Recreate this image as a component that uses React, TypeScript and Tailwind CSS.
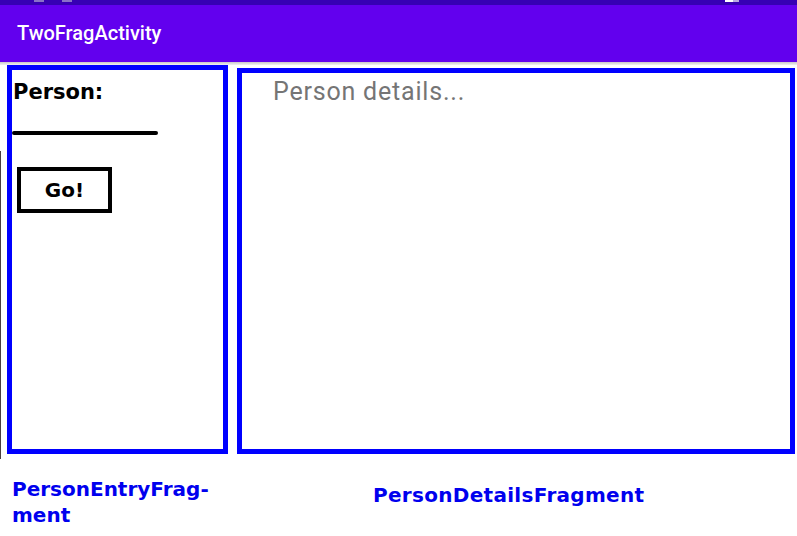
import React from 'react';

const BLUE = 'border-[#0000ff]';

export default function App() {
  return (
    <div className="w-[797px] h-[536px] bg-white flex flex-col overflow-hidden font-['Roboto',sans-serif]">
      {/* status bar */}
      <div className="h-[5px] bg-[#3700b3] relative shrink-0">
        <div className="absolute left-[34px] top-0 w-[10px] h-[2px] bg-[#8a70c8]" />
        <div className="absolute left-[62px] top-0 w-[10px] h-[2px] bg-[#8a70c8]" />
        <div className="absolute left-[725px] top-0 w-[8px] h-[2px] bg-white" />
        <div className="absolute left-[733px] top-0 w-[6px] h-[2px] bg-[#b9a8e0]" />
      </div>

      {/* toolbar */}
      <header className="h-[57px] bg-[#6200ee] shrink-0 flex items-center px-[17px]">
        <h1 className="text-white text-[20px] font-medium leading-none mb-[2px]">TwoFragActivity</h1>
      </header>
      <div className="h-[3px] bg-gradient-to-b from-[#c8c8c8] to-[#f2f2f2] shrink-0" />

      {/* fragments */}
      <div className="flex items-start pl-[7px] gap-[9px] relative">
        <div className="absolute left-0 top-[86px] w-px h-[308px] bg-[#4a4040]" />
        <section className={`w-[221px] h-[389px] border-[5px] ${BLUE} shrink-0 font-['DejaVu_Sans',sans-serif]`}>
          <p className="text-[21px] font-bold text-black pl-[1px] pt-[10px] leading-[24px]">Person:</p>
          <div className="mt-[27px] w-[146px] h-[4px] rounded-full bg-black" />
          <button className="mt-[32px] ml-[5px] w-[95px] h-[46px] border-[4px] border-black flex items-center justify-center text-[20px] font-bold text-black leading-none">
            Go!
          </button>
        </section>
        <section className={`w-[558px] h-[386px] border-[5px] ${BLUE} mt-[3px]`}>
          <p className="text-[25px] tracking-[0.8px] text-[#757575] pl-[31px] pt-[4px] leading-[30px]">Person details...</p>
        </section>
      </div>

      {/* labels */}
      <div className="flex font-['DejaVu_Sans',sans-serif] font-bold text-[20px] text-[#0000ee] leading-[26px]">
        <div className="w-[232px] pl-[12px] pt-[22px]">
          PersonEntryFrag-
          <br />
          ment
        </div>
        <div className="flex-1 pl-[141px] pt-[28px] tracking-[0.3px]">PersonDetailsFragment</div>
      </div>
    </div>
  );
}
